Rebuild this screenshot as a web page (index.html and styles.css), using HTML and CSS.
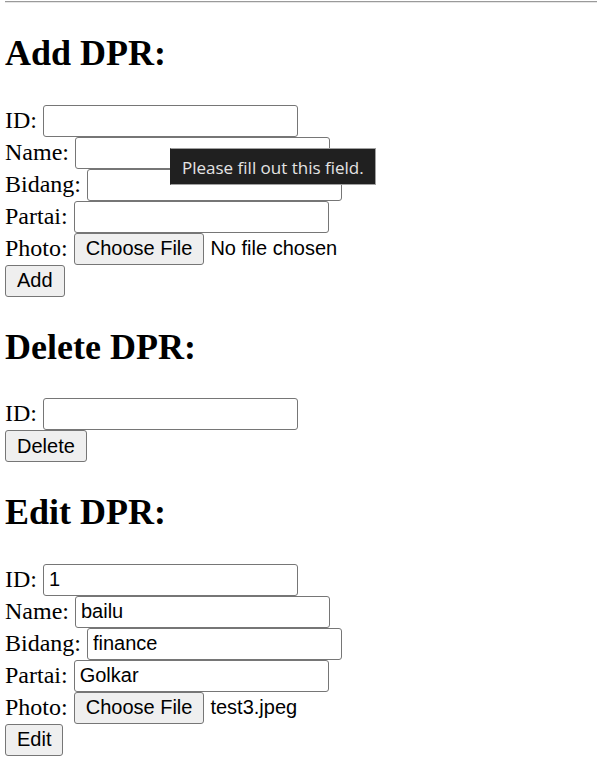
FILE: index.html
```html
<!DOCTYPE html>
<html>
<head>
<meta charset="utf-8">
<title>DPR</title>
<link rel="stylesheet" href="styles.css">
</head>
<body>
<hr class="rule">
<div class="page">
  <h2 class="title">Add DPR:</h2>
  <form class="form">
    <div class="row">ID: <input class="field" type="text"></div>
    <div class="row">Name: <input class="field" type="text"></div>
    <div class="row">Bidang: <input class="field" type="text"></div>
    <div class="row">Partai: <input class="field" type="text"></div>
    <div class="row">Photo: <span class="file"><button type="button" class="btn">Choose File</button><span class="file-name">No file chosen</span></span></div>
    <div class="row"><button type="button" class="btn">Add</button></div>
  </form>

  <h2 class="title">Delete DPR:</h2>
  <form class="form">
    <div class="row">ID: <input class="field" type="text"></div>
    <div class="row"><button type="button" class="btn">Delete</button></div>
  </form>

  <h2 class="title">Edit DPR:</h2>
  <form class="form">
    <div class="row">ID: <input class="field" type="text" value="1"></div>
    <div class="row">Name: <input class="field" type="text" value="bailu"></div>
    <div class="row">Bidang: <input class="field" type="text" value="finance"></div>
    <div class="row">Partai: <input class="field" type="text" value="Golkar"></div>
    <div class="row">Photo: <span class="file"><button type="button" class="btn">Choose File</button><span class="file-name">test3.jpeg</span></span></div>
    <div class="row"><button type="button" class="btn">Edit</button></div>
  </form>
</div>
<div class="tooltip">Please fill out this field.</div>
</body>
</html>
```
FILE: styles.css
```css
html, body {
  margin: 0;
  padding: 0;
  background: #ffffff;
}

body {
  font-family: "Liberation Serif", "Times New Roman", serif;
  font-size: 24px;
  color: #000000;
  overflow: hidden;
}

.rule {
  margin: 1px 0 0 5px;
  height: 0;
  border: 0;
  border-top: 1px solid #9a9a9a;
  border-bottom: 1px solid #e6e6e6;
}

.page {
  padding-left: 5px;
}

.title {
  font-size: 36px;
  font-weight: bold;
  margin: 30px 0 30px 0;
  line-height: 41.5px;
}

.form {
  margin: 0;
}

.row {
  height: 32px;
  white-space: nowrap;
  line-height: normal;
}

.field {
  box-sizing: border-box;
  width: 255px;
  height: 32px;
  margin: 0;
  padding: 0 5px;
  border: 1px solid #767676;
  border-radius: 3px;
  font-family: "Liberation Sans", Arial, sans-serif;
  font-size: 20px;
  color: #000000;
  background: #ffffff;
  vertical-align: baseline;
}

.btn {
  box-sizing: border-box;
  height: 32px;
  margin: 0;
  padding: 0 11px;
  border: 1px solid #767676;
  border-radius: 3px;
  background: #efefef;
  font-family: "Liberation Sans", Arial, sans-serif;
  font-size: 20px;
  color: #000000;
  vertical-align: baseline;
}

.file {
  font-family: "Liberation Sans", Arial, sans-serif;
  font-size: 20px;
}

.file-name {
  margin-left: 6px;
}

.tooltip {
  position: absolute;
  left: 170px;
  top: 148px;
  width: 206px;
  height: 37px;
  box-sizing: border-box;
  background: #202020;
  border: 1px solid #a0a0a0;
  border-left-color: #202020;
  color: #e4e4e4;
  font-family: "Open Sans", "Noto Sans", sans-serif;
  font-size: 17px;
  line-height: 37px;
  padding-left: 11px;
  white-space: nowrap;
}
```
